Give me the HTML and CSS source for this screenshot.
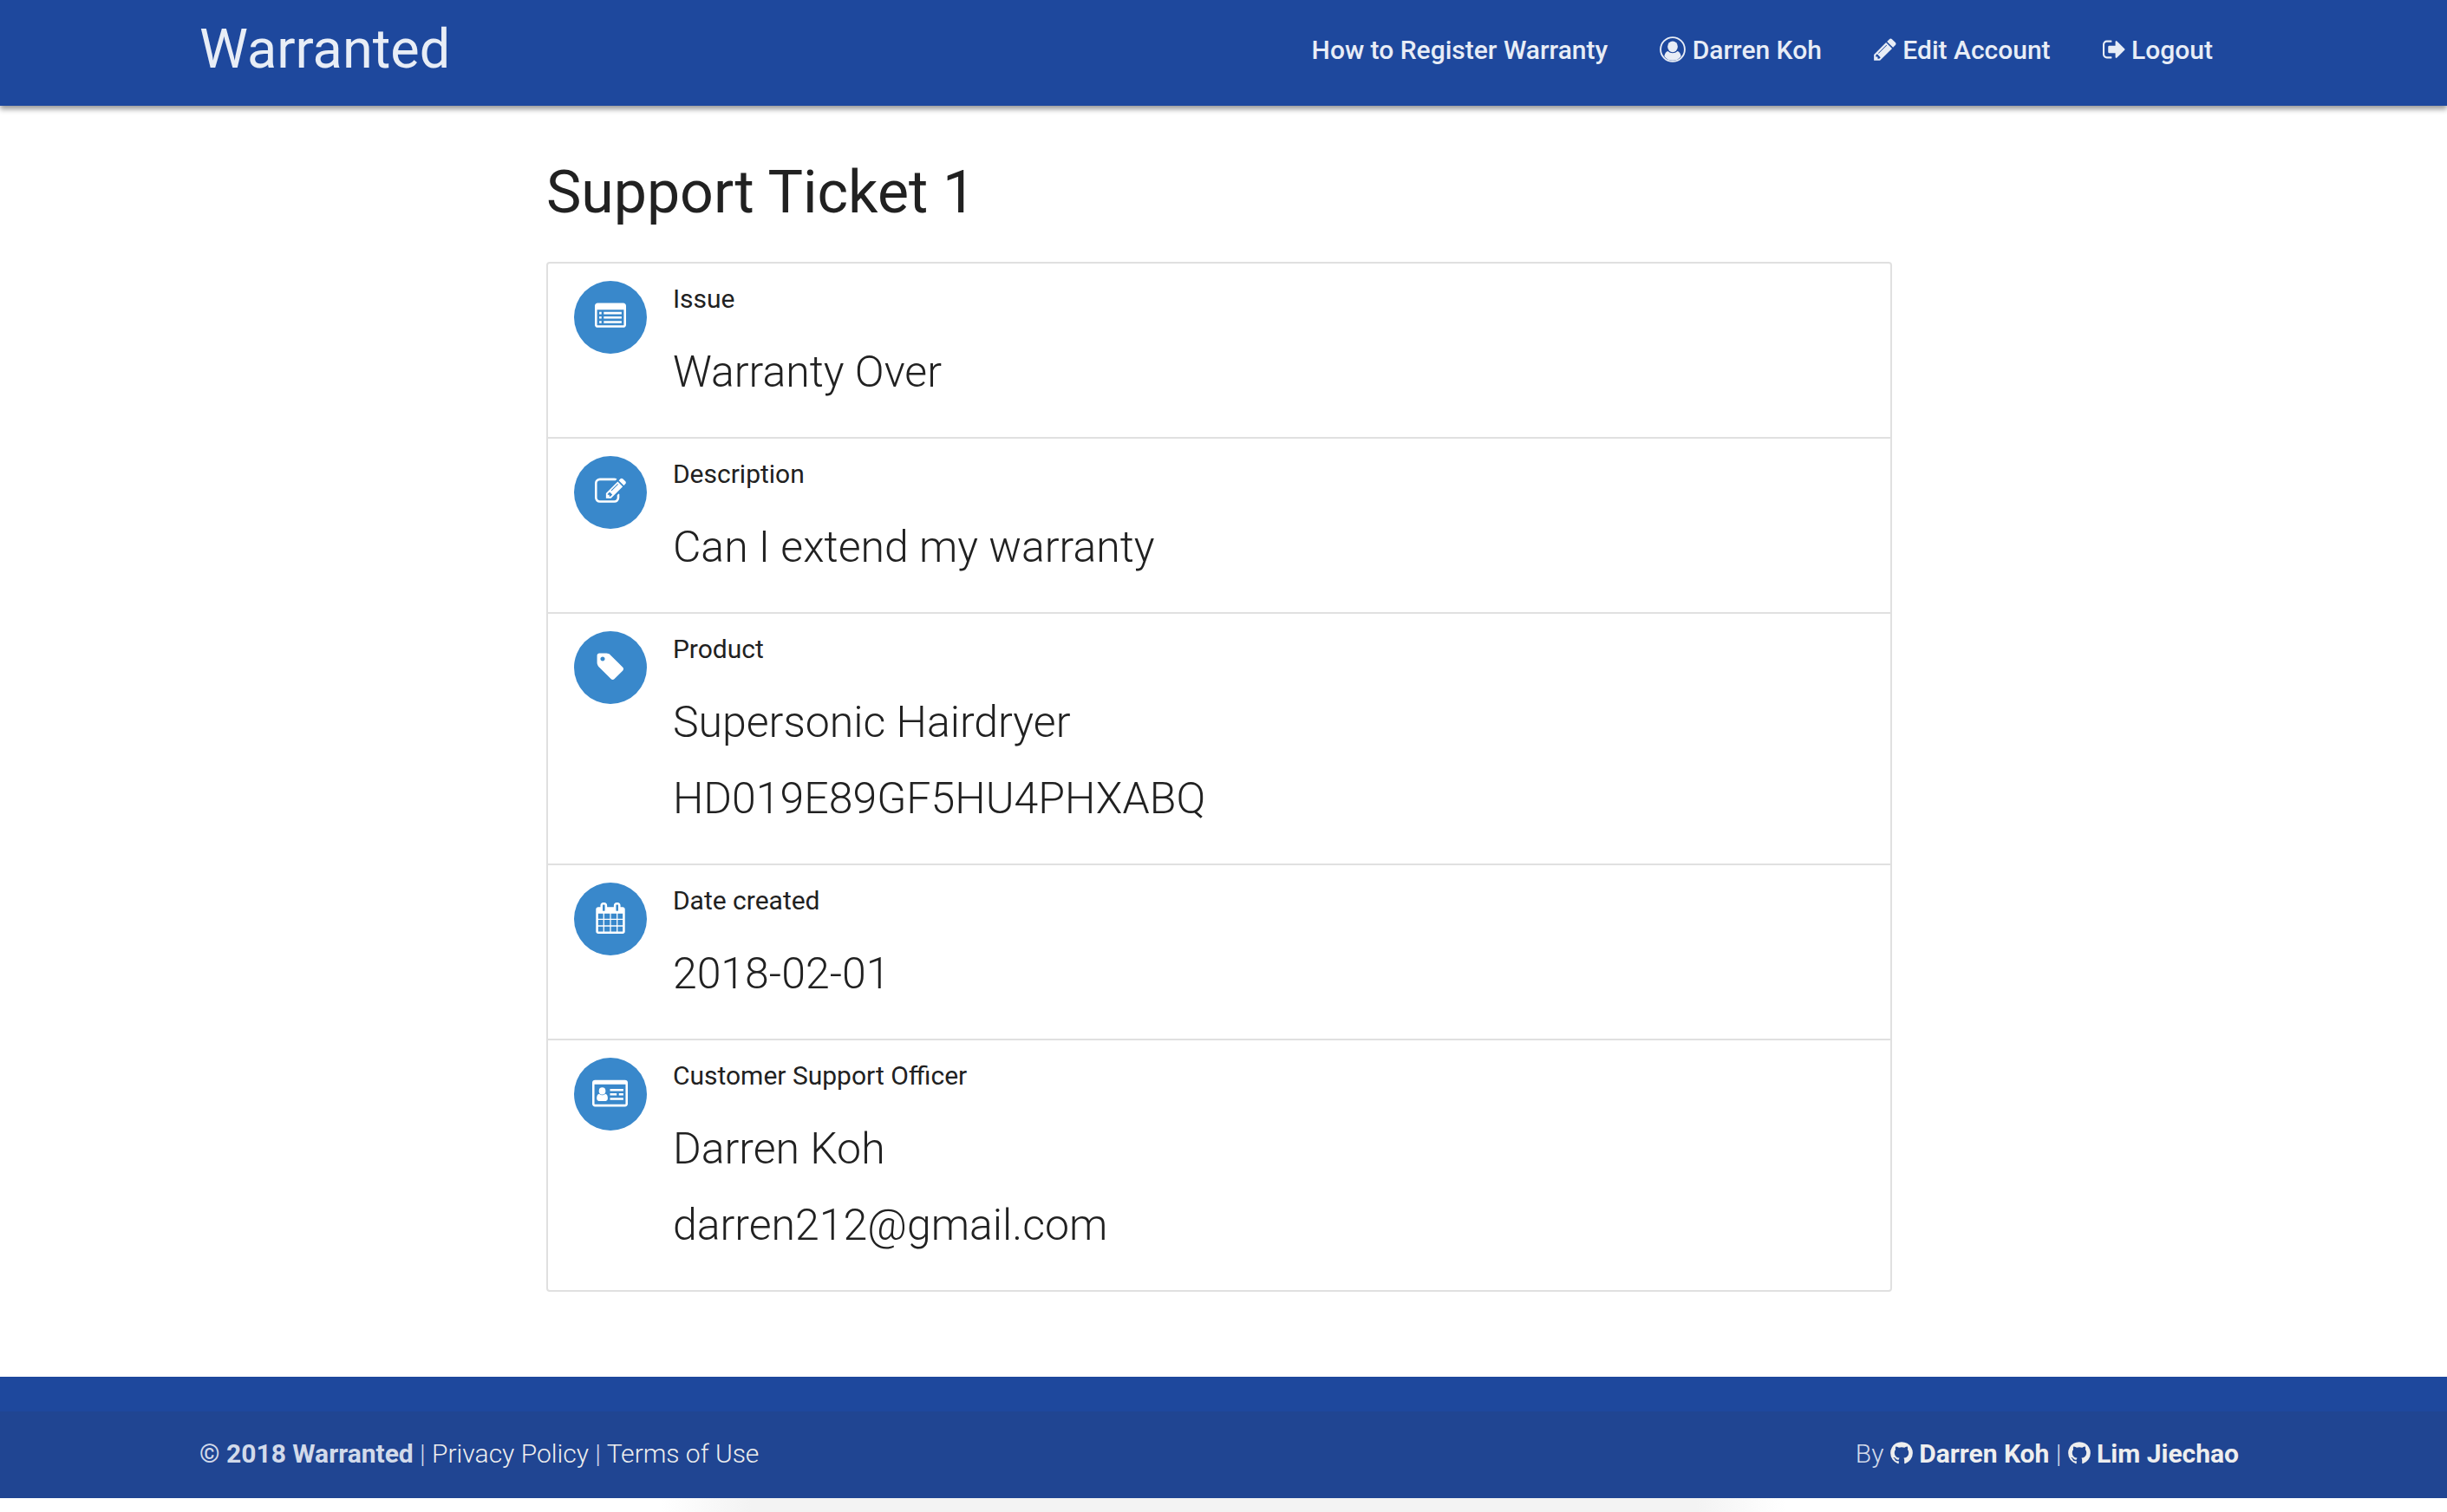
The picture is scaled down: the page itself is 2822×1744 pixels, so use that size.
FILE: index.html
```html
<!DOCTYPE html>
<html lang="en">
<head>
<meta charset="utf-8">
<title>Support Ticket 1 - Warranted</title>
<link rel="stylesheet" href="styles.css">
</head>
<body>
<header class="site-header">
  <a class="brand" href="#">Warranted</a>
  <nav class="nav">
    <a href="#">How to Register Warranty</a>
    <a href="#"><svg class="icon" viewBox="0 0 1792 1792" aria-hidden="true"><circle cx="896" cy="896" r="832" fill="none" stroke="currentColor" stroke-width="112"/><ellipse cx="896" cy="704" rx="350" ry="380"/><path d="M560 1010q140 140 336 140t336-140q190 60 240 360-220 290-576 290t-576-290q50-300 240-360z"/></svg> Darren Koh</a>
    <a href="#"><svg class="icon icon-narrow" viewBox="128 0 1536 1792" aria-hidden="true"><path d="M491 1536l91-91-235-235-91 91v107h128v128h107zm523-928q0-22-22-22-10 0-17 7l-542 542q-7 7-7 17 0 22 22 22 10 0 17-7l542-542q7-7 7-17zm-54-192l416 416-832 832h-416v-416zm683 96q0 53-37 90l-166 166-416-416 166-165q36-38 90-38 53 0 91 38l235 234q37 39 37 91z"/></svg> Edit Account</a>
    <a href="#"><svg class="icon icon-narrow" viewBox="64 0 1600 1792" aria-hidden="true"><path d="M704 1440q0 4 1 20t.5 26.5-3 23.5-10 19.5-20.5 6.500h-320q-119 0-203.500-84.500t-84.500-203.500v-704q0-119 84.500-203.500t203.500-84.500h320q13 0 22.500 9.500t9.500 22.500q0 4 1 20t.5 26.500-3 23.500-10 19.500-20.500 6.500h-320q-66 0-113 47t-47 113v704q0 66 47 113t113 47h312l11.500 1 11.500 3 8 5.500 7 9 2 13.500zm928-544q0 26-19 45l-544 544q-19 19-45 19t-45-19-19-45v-288h-448q-26 0-45-19t-19-45v-384q0-26 19-45t45-19h448v-288q0-26 19-45t45-19 45 19l544 544q19 19 19 45z"/></svg> Logout</a>
  </nav>
</header>

<div class="page">
<main class="content">
  <h1 class="title">Support Ticket 1</h1>
  <ul class="collection">
    <li class="item">
      <span class="badge"><svg viewBox="0 0 1792 1792" aria-hidden="true"><path fill-rule="evenodd" d="M160 128h1472q66 0 113 47t47 113v1088q0 66-47 113t-113 47h-1472q-66 0-113-47t-47-113v-1088q0-66 47-113t113-47zM128 512v864q0 32 32 32h1472q32 0 32-32v-864z"/><path d="M256 640h128v128h-128zM256 896h128v128h-128zM256 1152h128v128h-128zM512 640h1024v128h-1024zM512 896h1024v128h-1024zM512 1152h1024v128h-1024z"/></svg></span>
      <div class="details"><h2 class="label">Issue</h2><p class="value">Warranty Over</p></div>
    </li>
    <li class="item">
      <span class="badge"><svg viewBox="0 0 1792 1792" aria-hidden="true"><path d="M888 1184l116-116-152-152-116 116v56h96v96h56zm440-720q-16-16-33 1l-350 350q-17 17-1 33t33-1l350-350q17-17 1-33zm80 594v190q0 119-84.500 203.500t-203.500 84.500h-832q-119 0-203.500-84.500t-84.500-203.500v-832q0-119 84.500-203.500t203.500-84.500h832q63 0 117 25 15 7 18 23 3 17-9 29l-49 49q-14 14-32 8-23-6-45-6h-832q-66 0-113 47t-47 113v832q0 66 47 113t113 47h832q66 0 113-47t47-113v-126q0-13 9-22l64-64q15-15 35-7t20 29zm-96-738l288 288-672 672h-288v-288zm444 132l-92 92-288-288 92-92q28-28 68-28t68 28l152 152q28 28 28 68t-28 68z"/></svg></span>
      <div class="details"><h2 class="label">Description</h2><p class="value">Can I extend my warranty</p></div>
    </li>
    <li class="item">
      <span class="badge"><svg viewBox="0 0 1792 1792" aria-hidden="true"><path d="M576 448q0-53-37.500-90.500t-90.500-37.500-90.500 37.500-37.500 90.500 37.500 90.500 90.500 37.500 90.500-37.500 37.500-90.500zm1067 576q0 53-37 90l-491 492q-39 37-91 37-53 0-90-37l-715-716q-38-37-64.500-101t-26.500-117v-416q0-52 38-90t90-38h416q53 0 117 26.500t102 64.500l715 714q37 39 37 91z"/></svg></span>
      <div class="details"><h2 class="label">Product</h2><p class="value">Supersonic Hairdryer</p><p class="value">HD019E89GF5HU4PHXABQ</p></div>
    </li>
    <li class="item">
      <span class="badge"><svg viewBox="0 0 1792 1792" aria-hidden="true"><path d="M192 1664h288v-288h-288v288zm352 0h320v-288h-320v288zm-352-352h288v-320h-288v320zm352 0h320v-320h-320v320zm-352-384h288v-288h-288v288zm736 736h320v-288h-320v288zm-384-736h320v-288h-320v288zm768 736h288v-288h-288v288zm-384-352h320v-320h-320v320zm-352-864v-288q0-13-9.500-22.500t-22.500-9.500h-64q-13 0-22.500 9.500t-9.500 22.500v288q0 13 9.500 22.500t22.500 9.500h64q13 0 22.500-9.500t9.500-22.500zm736 864h288v-320h-288v320zm-384-384h320v-288h-320v288zm384 0h288v-288h-288v288zm32-480v-288q0-13-9.500-22.500t-22.500-9.500h-64q-13 0-22.500 9.500t-9.500 22.500v288q0 13 9.500 22.500t22.500 9.500h64q13 0 22.500-9.500t9.500-22.500zm384-64v1280q0 52-38 90t-90 38h-1408q-52 0-90-38t-38-90v-1280q0-52 38-90t90-38h128v-96q0-66 47-113t113-47h64q66 0 113 47t47 113v96h384v-96q0-66 47-113t113-47h64q66 0 113 47t47 113v96h128q52 0 90 38t38 90z"/></svg></span>
      <div class="details"><h2 class="label">Date created</h2><p class="value">2018-02-01</p></div>
    </li>
    <li class="item">
      <span class="badge"><svg class="wide" viewBox="0 0 2048 1792" aria-hidden="true"><path fill-rule="evenodd" d="M160 128h1728q66 0 113 47t47 113v1216q0 66-47 113t-113 47h-1728q-66 0-113-47t-47-113v-1216q0-66 47-113t113-47zM128 384v1120q0 32 32 32h1728q32 0 32-32v-1120z"/><ellipse cx="576" cy="768" rx="192" ry="208"/><path d="M400 930q80 78 176 78t176-78q144 20 144 270 0 128-112 144h-416q-112-16-112-144 0-250 144-270zM1024 640h768v128h-768zM1024 896h384v128h-384zM1536 896h256v128h-256zM1024 1152h768v128h-768z"/></svg></span>
      <div class="details"><h2 class="label">Customer Support Officer</h2><p class="value">Darren Koh</p><p class="value">darren212@gmail.com</p></div>
    </li>
  </ul>
</main>
</div>

<footer class="site-footer">
  <div class="footer-bar">
    <div><strong>© 2018 Warranted</strong> | <a href="#">Privacy Policy</a> | <a href="#">Terms of Use</a></div>
    <div>By <a class="author" href="#"><svg class="icon icon-narrow" viewBox="128 0 1536 1792" aria-hidden="true"><use href="#github"/></svg> Darren Koh</a> | <a class="author" href="#"><svg class="icon icon-narrow" viewBox="128 0 1536 1792" aria-hidden="true"><path id="github" d="M896 128q209 0 385.500 103t279.500 279.500 103 385.500q0 251-146.500 451.500t-378.500 277.500q-27 5-40-7t-13-30q0-3 .5-76.500t.5-134.500q0-97-52-142 57-6 102.500-18t94-39 81-66.500 53-105 20.500-150.500q0-119-79-206 37-91-8-204-28-9-81 11t-92 44l-38 24q-93-26-192-26t-192 26q-16-11-42.500-27t-83.500-38.500-85-13.500q-45 113-8 204-79 87-79 206 0 85 20.500 150t52.500 105 80.500 67 94 39 102.500 18q-39 36-49 103-21 10-45 15t-57 5-65.500-21.500-55.500-62.500q-19-32-48.500-52t-49.500-24l-20-3q-21 0-29 4.500t-5 11.500 9 14 13 12l7 5q22 10 43.500 38t31.500 51l10 23q13 38 44 61.500t67 30 69.500 7 55.500-3.500l23-4q0 38 .5 88.500t.5 54.500q0 18-13 30t-40 7q-232-77-378.500-277.500t-146.500-451.500q0-209 103-385.500t279.500-279.500 385.500-103z"/></svg> Lim Jiechao</a></div>
  </div>
</footer>
<div class="page-shade"></div>
</body>
</html>
```
FILE: styles.css
```css
* {
  box-sizing: border-box;
}

body {
  margin: 0;
  background: #fff;
  color: #212121;
  font: 400 30px/45px Roboto, "Liberation Sans", sans-serif;
}

a {
  color: inherit;
  text-decoration: none;
}

h1, h2, p, ul {
  margin: 0;
  padding: 0;
}

.icon {
  width: 30px;
  height: 30px;
  vertical-align: -4px;
  fill: currentColor;
}

.icon-narrow {
  width: 26px;
}

.site-header {
  display: flex;
  justify-content: space-between;
  min-height: 122px;
  padding: 0 270px 0 230px;
  background: #1e489d;
  color: #e8edf6;
  box-shadow: 0 4px 6px rgba(0, 0, 0, .4);
}

.brand {
  font-size: 63px;
  line-height: 114px;
}

.nav {
  display: flex;
  gap: 60px;
  font-weight: 500;
  line-height: 116px;
}

.page {
  padding: 58px 10px 98px 0;
}

.content {
  width: 55.2%;
  margin: 0 auto;
}

.title {
  font-size: 68px;
  font-weight: 400;
  line-height: 84px;
}

.collection {
  margin-top: 38px;
  border: 2px solid #e0e0e0;
  border-radius: 4px;
  list-style: none;
}

.item {
  display: flex;
  gap: 30px;
  padding: 20px 30px 46px;
  border-bottom: 2px solid #e0e0e0;
}

.item:last-child {
  border-bottom: 0;
}

.badge {
  display: flex;
  align-items: center;
  justify-content: center;
  flex: none;
  width: 84px;
  height: 84px;
  padding-bottom: 2px;
  border-radius: 50%;
  background: #3988cb;
}

.badge svg {
  width: 36px;
  height: 36px;
  fill: #fff;
}

.badge .wide {
  width: 41px;
}

.label {
  margin-bottom: 4px;
  font-size: 30px;
  font-weight: 400;
  line-height: 42px;
}

.value {
  margin-top: 30px;
  font-size: 50px;
  font-weight: 300;
  line-height: 58px;
}

.label + .value {
  margin-top: 34px;
}

.site-footer {
  padding-top: 40px;
  background: #1e489d;
}

.footer-bar {
  display: flex;
  align-items: center;
  justify-content: space-between;
  min-height: 100px;
  padding: 0 240px 4px 230px;
  background: #204592;
  color: #d2daea;
  font-weight: 300;
}

.footer-bar strong {
  font-weight: 700;
}

.footer-bar a {
  color: #eee;
}

.footer-bar .author {
  font-weight: 700;
}

.page-shade {
  width: 46%;
  height: 16px;
  margin: 0 auto;
  background: linear-gradient(90deg, #fff, #f3f3f3 8%, #f3f3f3 92%, #fff);
}
```
